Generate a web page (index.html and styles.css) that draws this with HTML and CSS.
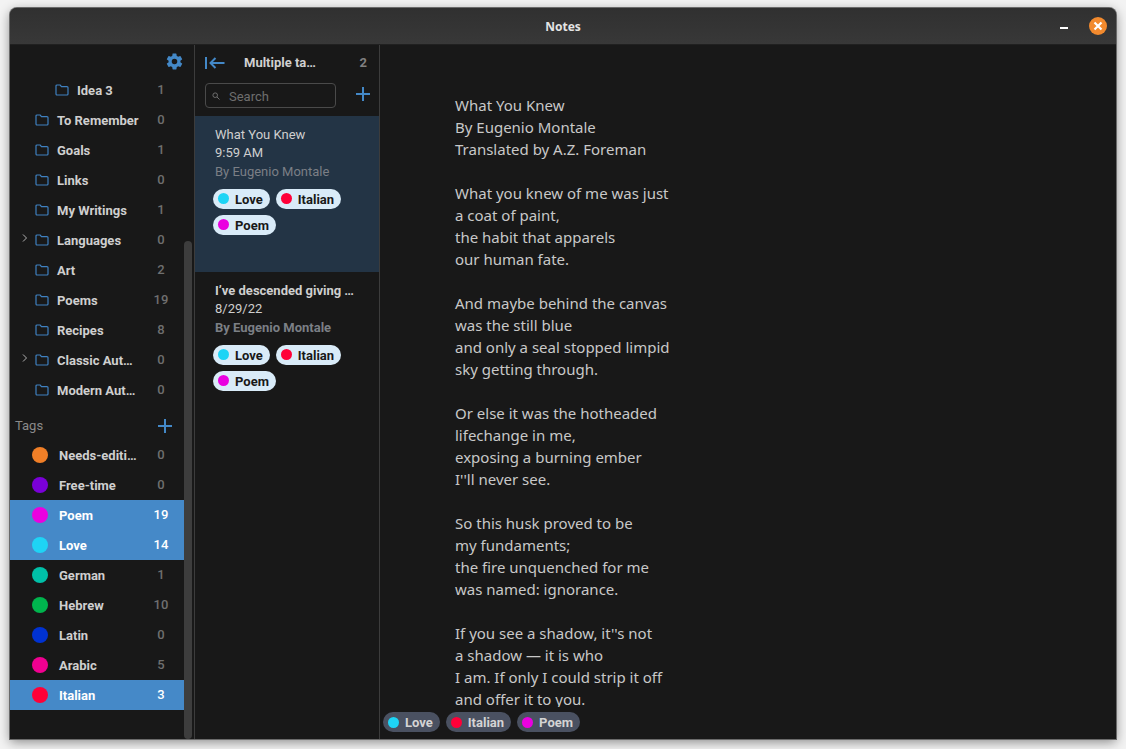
FILE: index.html
```html
<!DOCTYPE html>
<html lang="en">
<head>
<meta charset="utf-8">
<title>Notes</title>
<link rel="stylesheet" href="styles.css">
</head>
<body>
<svg class="defs" width="0" height="0" aria-hidden="true">
  <symbol id="folder" viewBox="0 0 14 12"><path d="M1 2a1 1 0 0 1 1-1h3.2l1.3 1.6H12a1 1 0 0 1 1 1V10a1 1 0 0 1-1 1H2a1 1 0 0 1-1-1z" fill="none" stroke="currentColor" stroke-width="1.2"/></symbol>
  <symbol id="chev" viewBox="0 0 6 8"><path d="M1 .5 4.5 4 1 7.5" fill="none" stroke="currentColor" stroke-width="1"/></symbol>
  <symbol id="plus" viewBox="0 0 14 14"><path d="M7 0v14M0 7h14" fill="none" stroke="currentColor" stroke-width="2"/></symbol>
</svg>
<div class="window">
  <header class="titlebar">
    <span class="title">Notes</span>
    <div class="winbtns">
      <span class="minimize"></span>
      <span class="close"><svg width="10" height="10" viewBox="0 0 10 10"><path d="M1.5 1.5l7 7M8.5 1.5l-7 7" stroke="#fff" stroke-width="2.2" fill="none"/></svg></span>
    </div>
  </header>
  <div class="panes">
    <aside class="sidebar">
      <div class="gear-row">
        <svg class="gear" width="19" height="19" viewBox="0 0 24 24"><path fill="currentColor" d="M19.4 13c.04-.33.1-.66.1-1s-.06-.67-.1-1l2.1-1.650c.2-.15.25-.42.13-.64l-2-3.46c-.12-.22-.39-.3-.61-.22l-2.490 1c-.52-.4-1.060-.73-1.690-.98l-.37-2.650A.506.506 0 0 0 14 2h-4c-.25 0-.46.18-.5.42l-.37 2.650c-.63.25-1.170.59-1.690.98l-2.490-1c-.22-.08-.49 0-.61.22l-2 3.460c-.13.22-.07.49.12.64L4.570 11c-.04.33-.07.66-.07 1s.03.67.07 1l-2.110 1.650c-.19.15-.25.42-.12.64l2 3.460c.12.22.39.3.61.22l2.490-1c.52.4 1.060.73 1.690.98l.37 2.650c.04.24.25.42.5.42h4c.25 0 .46-.18.5-.42l.37-2.650c.63-.25 1.170-.59 1.690-.98l2.490 1c.22.08.49 0 .61-.22l2-3.460c.12-.22.07-.49-.13-.64zM12 15.500A3.500 3.500 0 1 1 12 8.500a3.500 3.500 0 0 1 0 7z"/></svg>
      </div>
      <ul class="rows">
        <li class="row nested"><svg class="folder"><use href="#folder"/></svg><span class="name">Idea 3</span><span class="count">1</span></li>
        <li class="row"><svg class="folder"><use href="#folder"/></svg><span class="name">To Remember</span><span class="count">0</span></li>
        <li class="row"><svg class="folder"><use href="#folder"/></svg><span class="name">Goals</span><span class="count">1</span></li>
        <li class="row"><svg class="folder"><use href="#folder"/></svg><span class="name">Links</span><span class="count">0</span></li>
        <li class="row"><svg class="folder"><use href="#folder"/></svg><span class="name">My Writings</span><span class="count">1</span></li>
        <li class="row"><svg class="chev"><use href="#chev"/></svg><svg class="folder"><use href="#folder"/></svg><span class="name">Languages</span><span class="count">0</span></li>
        <li class="row"><svg class="folder"><use href="#folder"/></svg><span class="name">Art</span><span class="count">2</span></li>
        <li class="row"><svg class="folder"><use href="#folder"/></svg><span class="name">Poems</span><span class="count">19</span></li>
        <li class="row"><svg class="folder"><use href="#folder"/></svg><span class="name">Recipes</span><span class="count">8</span></li>
        <li class="row"><svg class="chev"><use href="#chev"/></svg><svg class="folder"><use href="#folder"/></svg><span class="name">Classic Aut…</span><span class="count">0</span></li>
        <li class="row"><svg class="folder"><use href="#folder"/></svg><span class="name">Modern Aut…</span><span class="count">0</span></li>
      </ul>
      <div class="tags-head"><span>Tags</span><svg class="plus-small"><use href="#plus"/></svg></div>
      <ul class="rows">
        <li class="row tag"><span class="dot orange"></span><span class="name">Needs-editi…</span><span class="count">0</span></li>
        <li class="row tag"><span class="dot violet"></span><span class="name">Free-time</span><span class="count">0</span></li>
        <li class="row tag active"><span class="dot magenta"></span><span class="name">Poem</span><span class="count">19</span></li>
        <li class="row tag active"><span class="dot cyan"></span><span class="name">Love</span><span class="count">14</span></li>
        <li class="row tag"><span class="dot teal"></span><span class="name">German</span><span class="count">1</span></li>
        <li class="row tag"><span class="dot green"></span><span class="name">Hebrew</span><span class="count">10</span></li>
        <li class="row tag"><span class="dot blue"></span><span class="name">Latin</span><span class="count">0</span></li>
        <li class="row tag"><span class="dot pink"></span><span class="name">Arabic</span><span class="count">5</span></li>
        <li class="row tag active"><span class="dot red"></span><span class="name">Italian</span><span class="count">3</span></li>
      </ul>
      <div class="scrollthumb"></div>
    </aside>
    <section class="list">
      <div class="list-head">
        <svg class="back" width="20" height="12" viewBox="0 0 20 12"><path d="M1 0v12M19.500 6H6M10.500 1 5.500 6l5 5" fill="none" stroke="currentColor" stroke-width="2"/></svg>
        <span class="list-title">Multiple ta…</span>
        <span class="list-count">2</span>
      </div>
      <div class="search-row">
        <div class="search">
          <svg width="8" height="8" viewBox="0 0 8 8"><circle cx="3.200" cy="3.200" r="2.300" fill="none" stroke="currentColor"/><path d="M5 5l2.500 2.500" stroke="currentColor"/></svg>
          <span class="search-text">Search</span>
        </div>
        <svg class="plus-big"><use href="#plus"/></svg>
      </div>
      <article class="note selected">
        <div class="note-title">What You Knew</div>
        <div class="note-date">9:59 AM</div>
        <div class="note-by">By Eugenio Montale</div>
        <div class="chips">
          <span class="chip"><span class="chip-dot cyan"></span>Love</span>
          <span class="chip"><span class="chip-dot red"></span>Italian</span>
          <span class="chip"><span class="chip-dot magenta"></span>Poem</span>
        </div>
      </article>
      <article class="note unread">
        <div class="note-title">I’ve descended giving …</div>
        <div class="note-date">8/29/22</div>
        <div class="note-by">By Eugenio Montale</div>
        <div class="chips">
          <span class="chip"><span class="chip-dot cyan"></span>Love</span>
          <span class="chip"><span class="chip-dot red"></span>Italian</span>
          <span class="chip"><span class="chip-dot magenta"></span>Poem</span>
        </div>
      </article>
    </section>
    <main class="editor">
      <div class="poem">
<p>What You Knew<br>By Eugenio Montale<br>Translated by A.Z. Foreman</p>
<p>What you knew of me was just<br>a coat of paint,<br>the habit that apparels<br>our human fate.</p>
<p>And maybe behind the canvas<br>was the still blue<br>and only a seal stopped limpid<br>sky getting through.</p>
<p>Or else it was the hotheaded<br>lifechange in me,<br>exposing a burning ember<br>I''ll never see.</p>
<p>So this husk proved to be<br>my fundaments;<br>the fire unquenched for me<br>was named: ignorance.</p>
<p>If you see a shadow, it''s not<br>a shadow — it is who<br>I am. If only I could strip it off<br>and offer it to you.</p>
      </div>
      <div class="editor-tags">
        <span class="chip dark"><span class="chip-dot cyan"></span>Love</span>
        <span class="chip dark"><span class="chip-dot red"></span>Italian</span>
        <span class="chip dark"><span class="chip-dot magenta"></span>Poem</span>
      </div>
    </main>
  </div>
</div>
</body>
</html>
```
FILE: styles.css
```css
* { box-sizing: border-box; }
html, body { height: 100%; }
body {
  margin: 0;
  padding: 8px 10px 10px;
  background: #f3f3f3;
  overflow: hidden;
  font-family: Roboto, "Liberation Sans", sans-serif;
  color: #d0d0d0;
}
.defs { position: absolute; }
ul { list-style: none; margin: 0; padding: 0; }
.window {
  height: 731px;
  display: flex;
  flex-direction: column;
  background: #181818;
  border-radius: 7px 7px 0 0;
  box-shadow: 0 0 0 1px #6a6a6a, 0 3px 12px rgba(0,0,0,.45);
  overflow: hidden;
}
.titlebar {
  height: 37px;
  flex: none;
  display: flex;
  align-items: center;
  justify-content: center;
  position: relative;
  background: linear-gradient(#303030, #383838);
  border-bottom: 1px solid #202020;
}
.title { font-size: 12px; font-weight: 700; color: #e4e4e4; font-family: "Noto Sans", sans-serif; }
.winbtns {
  position: absolute;
  right: 9px;
  top: 9px;
  display: flex;
  align-items: center;
  gap: 20px;
}
.minimize { width: 8px; height: 2px; background: #fff; margin-top: 4px; margin-right: 1px; }
.close {
  width: 18px;
  height: 18px;
  border-radius: 50%;
  background: #f28a2e;
  display: flex;
  align-items: center;
  justify-content: center;
}
.panes { flex: 1; display: flex; min-height: 0; }
.sidebar {
  width: 185px;
  flex: none;
  position: relative;
  border-right: 1px solid #3c3c3c;
  padding-right: 10px;
}
.gear-row { height: 30px; display: flex; justify-content: flex-end; align-items: center; padding-top: 2px; }
.gear { color: #4388c7; }
.row {
  height: 30px;
  display: flex;
  align-items: center;
  position: relative;
  padding-left: 25px;
  font-size: 13px;
  font-weight: 700;
  color: #cfcfcf;
}
.row.nested { padding-left: 45px; }
.folder { width: 14px; height: 12px; color: #3f80c0; flex: none; margin-right: 8px; }
.chev { position: absolute; left: 12px; top: 9px; width: 6px; height: 8px; color: #b0b0b0; }
.name { flex: 1; min-width: 0; white-space: nowrap; }
.count { width: 32px; margin-right: 7px; text-align: center; color: #6f6f6f; font-weight: 500; position: relative; top: -1px; flex: none; }
.tags-head {
  height: 35px;
  display: flex;
  align-items: center;
  justify-content: space-between;
  padding: 5px 12px 0 5px;
  font-size: 13px;
  color: #8a8a8a;
}
.plus-small { width: 14px; height: 14px; color: #4388c7; position: relative; top: 1px; }
.row.tag { padding-left: 22px; }
.dot { width: 16px; height: 16px; border-radius: 50%; flex: none; margin-right: 11px; }
.row.active { background: #4589c8; color: #fff; }
.row.active .count { color: #fff; }
.orange { background: #f07f27; }
.violet { background: #7a00d8; }
.magenta { background: #ea00e0; }
.cyan { background: #1ed4f5; }
.teal { background: #00c0a8; }
.green { background: #00b44e; }
.blue { background: #0032d2; }
.pink { background: #f00090; }
.red { background: #ff0038; }
.scrollthumb {
  position: absolute;
  left: 174px;
  top: 196px;
  bottom: 0;
  width: 8px;
  background: #3d3d3d;
  border-radius: 4px;
}
.list {
  width: 185px;
  flex: none;
  border-right: 1px solid #3c3c3c;
}
.list-head { height: 35px; display: flex; align-items: center; padding: 0 12px 0 10px; font-size: 13px; font-weight: 700; }
.back { color: #4388c7; flex: none; }
.list-title { flex: 1; padding-left: 19px; white-space: nowrap; }
.list-count { color: #808080; }
.search-row { height: 36px; display: flex; align-items: center; justify-content: space-between; padding: 0 9px 5px 10px; }
.search {
  width: 131px;
  height: 25px;
  border: 1px solid #4a4a4a;
  border-radius: 4px;
  display: flex;
  align-items: center;
  padding-left: 6px;
  gap: 9px;
  font-size: 13px;
  color: #6e6e6e;
}
.search-text { position: relative; top: 1px; }
.plus-big { width: 14px; height: 14px; color: #4388c7; position: relative; top: -2px; }
.note { height: 156px; padding: 9.800px 20px 0; font-size: 13px; line-height: 18.500px; color: #cfcfcf; }
.note.selected { background: #233445; }
.note.unread .note-title { font-weight: 700; white-space: nowrap; }
.note.unread .note-by { font-weight: 700; }
.note-by { color: #7b7f85; }
.chips { display: flex; flex-wrap: wrap; gap: 6px; margin: 7.700px -10px 0 -2px; }
.chip {
  height: 20px;
  display: inline-flex;
  align-items: center;
  padding: 1px 7px 0 5px;
  border-radius: 10px;
  background: #d9ebf8;
  color: #181818;
  font-size: 13px;
  font-weight: 700;
  line-height: 19px;
}
.chip-dot { width: 11px; height: 11px; border-radius: 50%; margin: -1px 6px 0 0; flex: none; }
.chip.dark { background: #4a5161; color: #d4d4d4; }
.editor { flex: 1; min-width: 0; position: relative; display: flex; flex-direction: column; }
.poem {
  flex: 1;
  min-height: 0;
  overflow: hidden;
  margin-bottom: 32px;
  padding: 49px 75px 0;
  font-family: "Noto Sans", sans-serif;
  font-size: 15px;
  line-height: 22px;
  color: #c8c8c8;
}
.poem p { margin: 0 0 22px; }
.editor-tags {
  position: absolute;
  left: 3px;
  bottom: 7px;
  display: flex;
  gap: 6px;
}
```
